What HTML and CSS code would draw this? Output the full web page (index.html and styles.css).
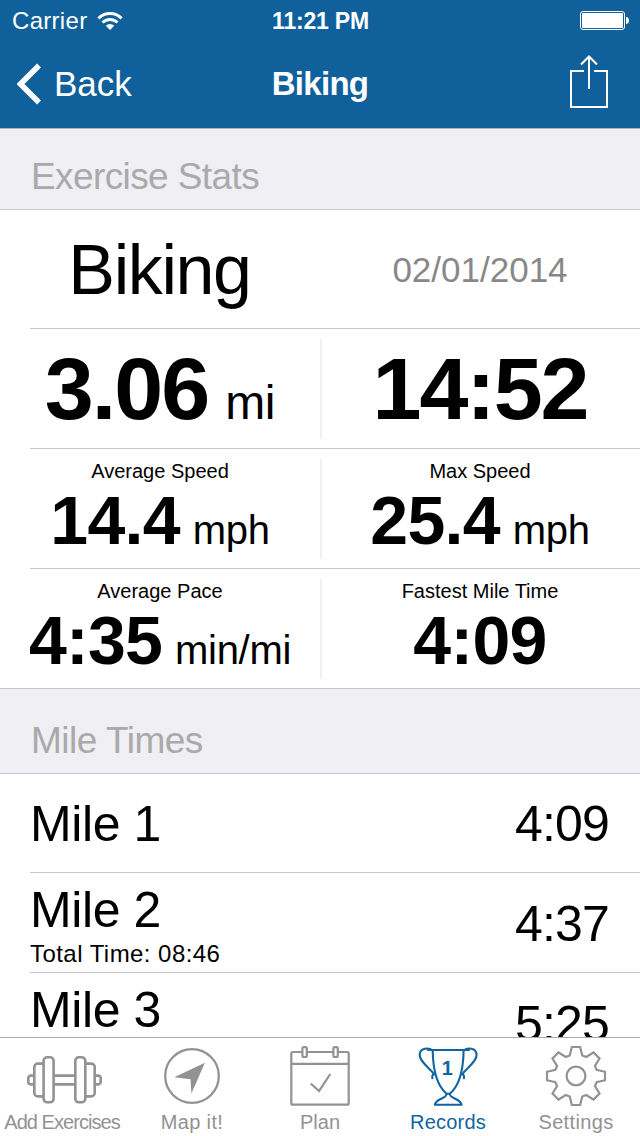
FILE: index.html
```html
<!DOCTYPE html>
<html lang="en">
<head>
<meta charset="utf-8">
<title>Biking</title>
<link rel="stylesheet" href="styles.css">
</head>
<body>
<div class="app">
  <header class="top">
    <div class="status">
      <div class="carrier"><span class="carrier-name">Carrier</span>
        <svg class="wifi" width="26" height="20" viewBox="0 0 26 20"><g fill="none" stroke="#fff" stroke-width="3"><path d="M1.4 7.4a16.400 16.400 0 0 1 23.200 0"/><path d="M5.500 11.500a10.600 10.600 0 0 1 15 0"/></g><path fill="#fff" d="M13 19l-4.200-4.300a6 6 0 0 1 8.400 0z"/></svg>
      </div>
      <div class="clock">11:21 PM</div>
      <svg class="battery" width="50" height="20" viewBox="0 0 50 20"><rect x=".5" y=".5" width="44" height="18" rx="2.5" fill="none" stroke="#fff"/><rect x="2" y="2" width="41" height="15" rx="1" fill="#fff"/><path fill="#fff" d="M46 6c4 0 4 7 0 7z"/></svg>
    </div>
    <nav class="nav">
      <div class="back"><svg width="26" height="42" viewBox="0 0 26 42"><path d="M22 2.500L3.500 21l18.500 18.500" fill="none" stroke="#fff" stroke-width="5.500"/></svg><span class="back-text">Back</span></div>
      <h1 class="title">Biking</h1>
      <svg class="share" width="40" height="54" viewBox="0 0 40 54"><path d="M15 16H2v36h36V16H25M20 34V2M12 9.500l8-8 8 8" fill="none" stroke="#fff" stroke-width="2"/></svg>
    </nav>
  </header>
  <main class="content">
    <h2 class="section first">Exercise Stats</h2>
    <section class="stats">
      <div class="row"><div class="cell"><p class="name">Biking</p></div><div class="cell"><p class="date">02/01/2014</p></div></div>
      <div class="row split"><div class="cell"><p class="big">3.06<span class="unit"> mi</span></p></div><div class="cell"><p class="big">14:52</p></div></div>
      <div class="row split"><div class="cell"><p class="label">Average Speed</p><p class="mid">14.4<span class="unit"> mph</span></p></div><div class="cell"><p class="label">Max Speed</p><p class="mid">25.4<span class="unit"> mph</span></p></div></div>
      <div class="row split"><div class="cell"><p class="label">Average Pace</p><p class="mid">4:35<span class="unit"> min/mi</span></p></div><div class="cell"><p class="label">Fastest Mile Time</p><p class="mid">4:09</p></div></div>
    </section>
    <h2 class="section second">Mile Times</h2>
    <section class="miles">
      <div class="mile single"><p class="mile-name">Mile 1</p><p class="time">4:09</p></div>
      <div class="mile"><div class="mile-info"><p class="mile-name">Mile 2</p><p class="total">Total Time: 08:46</p></div><p class="time">4:37</p></div>
      <div class="mile"><div class="mile-info"><p class="mile-name">Mile 3</p></div><p class="time">5:25</p></div>
    </section>
  </main>
  <footer class="tabs">
    <div class="tab add">
      <svg width="80" height="64" viewBox="0 0 80 64"><g fill="none" stroke="#929292" stroke-width="2.600"><rect x="19.600" y="13.300" width="10" height="45" rx="3.500"/><rect x="51.300" y="13.300" width="10" height="45" rx="3.500"/><path d="M19 19.600h-5.200a3.500 3.500 0 0 0-3.500 3.500v25.800a3.500 3.500 0 0 0 3.500 3.500H19M62 19.600h5.200a3.500 3.500 0 0 1 3.500 3.500v25.800a3.500 3.500 0 0 1-3.500 3.500H62M10.300 31.600H6.800a2.500 2.500 0 0 0-2.500 2.500v3.800a2.500 2.500 0 0 0 2.500 2.500h3.500M70.700 31.600h3.500a2.500 2.500 0 0 1 2.500 2.500v3.800a2.500 2.500 0 0 1-2.500 2.500h-3.500M30 31.600h21M30 40.400h21"/></g></svg>
      <span class="tab-text">Add Exercises</span>
    </div>
    <div class="tab map">
      <svg width="64" height="64" viewBox="0 0 64 64"><circle cx="32" cy="32" r="26.800" fill="none" stroke="#929292" stroke-width="2.300"/><path fill="#929292" d="M44.900 18.800L14.300 33.300l16.200 2 .9 14.200z"/></svg>
      <span class="tab-text">Map it!</span>
    </div>
    <div class="tab plan">
      <svg width="64" height="64" viewBox="0 0 64 64"><g fill="none" stroke="#929292" stroke-width="2.200"><rect x="3.300" y="8" width="57.400" height="52.700" rx="1.500"/><path d="M3.300 19.900h57.400M22.800 39.500l8.200 7.500L42.300 30"/><rect x="14.400" y="3.100" width="4.400" height="9.900" rx="1.500" fill="#fff"/><rect x="45.400" y="3.100" width="4.400" height="9.900" rx="1.500" fill="#fff"/></g></svg>
      <span class="tab-text">Plan</span>
    </div>
    <div class="tab records active">
      <svg width="64" height="64" viewBox="0 0 64 64"><g fill="none" stroke="#1164a1" stroke-width="2.100" stroke-linejoin="round" stroke-linecap="round"><path d="M12 6h41M16.700 6.500C17 27 21.500 42 30.500 49.700h3.400C43 42 47.300 27 47.600 6.500"/><path d="M16.700 6.500C12.500 3 4.500 4 3.700 10c-.7 8 11 14.500 14.300 20.500-1.800.2-2 1.800-1.600 3.800"/><path d="M47.600 6.500C51.800 3 59.800 4 60.600 10c.7 8-11 14.500-14.300 20.500 1.800.2 2 1.800 1.600 3.800"/><path d="M30.500 49.700c1 4.800-10.500 4.500-11.700 11h26.800c-1.200-6.500-12.700-6.200-11.700-11"/></g><text class="cup-number" x="31.300" y="30.700" text-anchor="middle">1</text></svg>
      <span class="tab-text">Records</span>
    </div>
    <div class="tab settings">
      <svg width="64" height="64" viewBox="-32 -32 64 64"><g fill="none" stroke="#929292" stroke-width="2.200"><circle r="9.400"/><polygon points="-6.200,-20.600 -4.200,-29 4.200,-29 6.200,-20.600 10.200,-19 17.500,-23.500 23.500,-17.500 19,-10.200 20.600,-6.200 29,-4.200 29,4.200 20.600,6.200 19,10.200 23.500,17.500 17.500,23.500 10.200,19 6.200,20.600 4.200,29 -4.200,29 -6.200,20.600 -10.200,19 -17.500,23.500 -23.500,17.500 -19,10.200 -20.600,6.200 -29,4.200 -29,-4.200 -20.600,-6.200 -19,-10.200 -23.500,-17.500 -17.500,-23.500 -10.200,-19"/></g></svg>
      <span class="tab-text">Settings</span>
    </div>
  </footer>
</div>
</body>
</html>
```
FILE: styles.css
```css
* { box-sizing: border-box; margin: 0; padding: 0; }
body { font-family: "Liberation Sans", Arial, sans-serif; background: #fff; color: #000; }
svg { display: block; flex: none; }
.app { width: 640px; height: 1136px; display: flex; flex-direction: column; overflow: hidden; }
.top { height: 128px; background: #10619b; color: #fff; flex: none; }
.status { height: 40px; display: grid; grid-template-columns: 1fr auto 1fr; align-items: center; padding: 2px 11px 0 12px; }
.carrier { display: flex; align-items: center; gap: 10px; font-size: 24px; line-height: 38px; letter-spacing: .3px; }
.clock { font-size: 23px; font-weight: 700; line-height: 38px; letter-spacing: -.2px; }
.battery { justify-self: end; margin-right: -1px; }
.nav { height: 88px; display: grid; grid-template-columns: 1fr auto 1fr; align-items: center; }
.back { display: flex; align-items: center; gap: 11px; font-size: 35px; line-height: 88px; padding-left: 17px; }
.title { font-size: 33px; line-height: 88px; letter-spacing: -.7px; }
.share { justify-self: end; margin: 0 31px 4px 0; }
.content { flex: 1; min-height: 0; overflow: hidden; }
.section { background: #efeff4; border-top: 1px solid #b2b2b2; border-bottom: 1px solid #c8c7cc; color: #aaa; font-weight: 400; font-size: 37px; line-height: 40px; letter-spacing: -.6px; padding-left: 31px; }
.first { height: 82px; padding-top: 28px; }
.second { height: 86px; padding-top: 32px; border-top-color: #c8c7cc; letter-spacing: -.5px; }
.row { height: 120px; display: grid; grid-template-columns: 1fr 1fr; position: relative; }
.row:first-child, .row:last-child { height: 119px; }
.row:not(:last-child)::after, .mile::after { content: ""; position: absolute; left: 30px; right: 0; bottom: 0; height: 1px; background: #c8c7cc; }
.split::before { content: ""; position: absolute; left: 320px; top: 10px; width: 2px; height: 100px; background: #efeff4; }
.cell { text-align: center; white-space: nowrap; }
.name { font-size: 70px; line-height: 120px; letter-spacing: -1.4px; padding-right: 1px; }
.date { font-size: 35px; line-height: 119px; color: #888; }
.big { font-size: 88px; font-weight: 700; line-height: 120px; letter-spacing: -2px; }
.big .unit { font-size: 48px; font-weight: 400; letter-spacing: -.3px; margin-left: 4px; }
.label { font-size: 20px; line-height: 24px; padding-top: 10px; }
.mid { font-size: 68px; font-weight: 700; line-height: 74px; letter-spacing: -.7px; }
.mid .unit { font-size: 40px; font-weight: 400; letter-spacing: -.3px; margin-left: 2px; }
.mile { height: 100px; display: flex; justify-content: space-between; position: relative; padding: 0 31px 0 30px; font-size: 50px; letter-spacing: -.4px; line-height: 102px; }
.single { height: 99px; line-height: 100px; }
.mile-info { padding-top: 9px; line-height: 56px; }
.time { letter-spacing: -.8px; }
.total { font-size: 24px; line-height: 31px; letter-spacing: .45px; }
.tabs { height: 99px; border-top: 1px solid #aaa; display: grid; grid-template-columns: repeat(5, 128px); flex: none; color: #929292; font-size: 20px; background: #fff; }
.tab { display: flex; flex-direction: column; align-items: center; gap: 2px; padding-top: 6px; line-height: 24px; white-space: nowrap; }
.add .tab-text { letter-spacing: -.95px; margin-right: 4px; }
.map .tab-text, .settings .tab-text { letter-spacing: .35px; }
.records .tab-text { letter-spacing: .2px; }
.active { color: #1164a1; }
.cup-number { font-size: 20px; font-weight: 700; fill: #1164a1; }
```
